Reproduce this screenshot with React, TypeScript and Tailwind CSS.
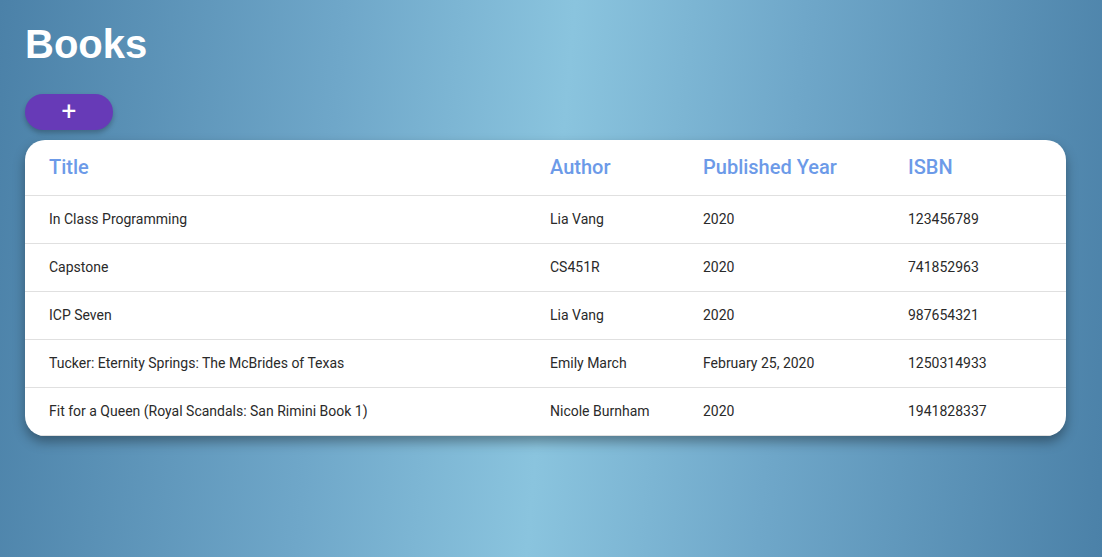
import React from "react";

const rows = [
  ["In Class Programming", "Lia Vang", "2020", "123456789"],
  ["Capstone", "CS451R", "2020", "741852963"],
  ["ICP Seven", "Lia Vang", "2020", "987654321"],
  ["Tucker: Eternity Springs: The McBrides of Texas", "Emily March", "February 25, 2020", "1250314933"],
  ["Fit for a Queen (Royal Scandals: San Rimini Book 1)", "Nicole Burnham", "2020", "1941828337"],
];

export default function App() {
  return (
    <div
      className="w-[1102px] h-[557px] overflow-hidden bg-[linear-gradient(95deg,#4b81a8_0%,#6fa7c9_30%,#8ac4de_50%,#6fa7c9_70%,#4b81a8_100%)] pl-[25px]"
      style={{ fontFamily: "Roboto, 'Noto Sans', sans-serif" }}
    >
      <h1
        className="mt-[21px] text-[40px] leading-[46px] font-bold text-white"
        style={{ fontFamily: "'Liberation Sans', Arial, sans-serif" }}
      >
        Books
      </h1>
      <button className="mt-[27px] w-[88px] h-[36px] rounded-full bg-[#673ab7] text-white text-[26px] leading-none flex items-center justify-center shadow-[0_3px_5px_rgba(0,0,0,0.25)]">
        <span className="-mt-[3px]">+</span>
      </button>
      <div className="mt-[10px] w-[1041px] bg-white rounded-[20px] overflow-hidden shadow-[0_6px_12px_rgba(0,0,0,0.35)]">
        <table className="w-full border-collapse table-fixed">
          <colgroup>
            <col className="w-[501px]" />
            <col className="w-[153px]" />
            <col className="w-[205px]" />
            <col />
          </colgroup>
          <thead>
            <tr className="h-[55px] border-b border-[#e0e0e0]">
              {["Title", "Author", "Published Year", "ISBN"].map((h) => (
                <th key={h} className="text-left pl-[24px] text-[20px] font-medium text-[#6c9ae8] pb-[1px]">
                  {h}
                </th>
              ))}
            </tr>
          </thead>
          <tbody>
            {rows.map((r, i) => (
              <tr key={i} className="h-[48px] border-b border-[#e0e0e0]">
                {r.map((c, j) => (
                  <td key={j} className="pl-[24px] text-[14px] text-[#2a2a2a] whitespace-nowrap">
                    {c}
                  </td>
                ))}
              </tr>
            ))}
          </tbody>
        </table>
      </div>
    </div>
  );
}
